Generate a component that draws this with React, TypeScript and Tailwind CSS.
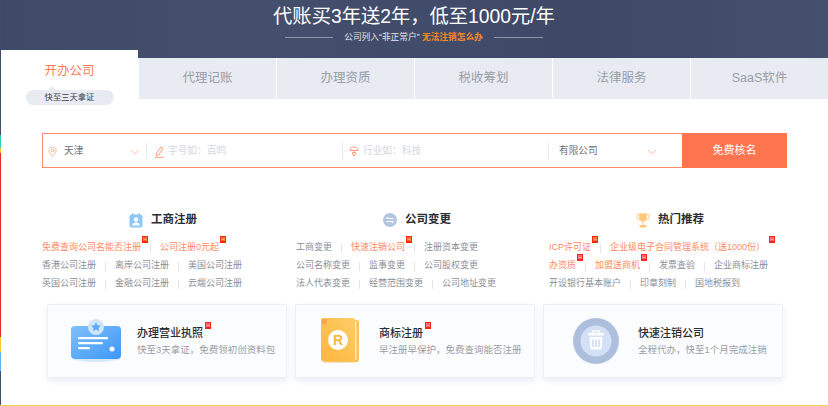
import { ChevronDown, MapPin } from "lucide-react";
import { ReactNode } from "react";

const FONT = "font-['Liberation_Sans','Noto_Sans_CJK_SC',sans-serif]";

type LinkItem = { text: string; hot?: boolean; orange?: boolean; badgeClass?: string };

const tabs = ["代理记账", "办理资质", "税收筹划", "法律服务", "SaaS软件"];

const columns: { title: string; icon: ReactNode; className: string; rows: LinkItem[][] }[] = [
  {
    title: "工商注册",
    icon: <CardIcon />,
    className: "w-[254px]",
    rows: [
      [
        { text: "免费查询公司名能否注册", hot: true, orange: true },
        { text: "公司注册0元起", hot: true, orange: true },
      ],
      [{ text: "香港公司注册" }, { text: "离岸公司注册" }, { text: "美国公司注册" }],
      [{ text: "英国公司注册" }, { text: "金融公司注册" }, { text: "云端公司注册" }],
    ],
  },
  {
    title: "公司变更",
    icon: <SwapIcon />,
    className: "w-[253px]",
    rows: [
      [{ text: "工商变更" }, { text: "快速注销公司", hot: true, orange: true }, { text: "注册资本变更" }],
      [{ text: "公司名称变更" }, { text: "监事变更" }, { text: "公司股权变更" }],
      [{ text: "法人代表变更" }, { text: "经营范围变更" }, { text: "公司地址变更" }],
    ],
  },
  {
    title: "热门推荐",
    icon: <TrophyIcon />,
    className: "w-[238px]",
    rows: [
      [
        { text: "ICP许可证", hot: true, orange: true },
        { text: "企业级电子合同管理系统（送1000份）", hot: true, orange: true, badgeClass: "-right-[10px]" },
      ],
      [
        { text: "办资质", hot: true, orange: true },
        { text: "加盟送商机", hot: true, orange: true },
        { text: "发票查验" },
        { text: "企业商标注册" },
      ],
      [{ text: "开设银行基本账户" }, { text: "印章刻制" }, { text: "国地税报到" }],
    ],
  },
];

function CardIcon() {
  return (
    <svg width="14" height="15" viewBox="0 0 14 15">
      <rect x="0.5" y="1.5" width="13" height="13" rx="2" fill="#8cc8f8" />
      <rect x="3" y="0" width="1.5" height="3" rx="0.7" fill="#8cc8f8" />
      <rect x="9.5" y="0" width="1.5" height="3" rx="0.7" fill="#8cc8f8" />
      <circle cx="7" cy="6.5" r="2.2" fill="#fff" />
      <path d="M3 12.5c.5-2.4 2-3 4-3s3.500.6 4 3z" fill="#fff" />
    </svg>
  );
}

function SwapIcon() {
  return (
    <svg width="14" height="14" viewBox="0 0 14 14">
      <circle cx="7" cy="7" r="7" fill="#b3c5e0" />
      <path d="M3.500 5.500h7M3.500 5.500l1.500-1.300M10.500 8.500h-7M10.500 8.500l-1.500 1.300" stroke="#fff" strokeWidth="1.100" fill="none" />
    </svg>
  );
}

function TrophyIcon() {
  return (
    <svg width="14" height="15" viewBox="0 0 14 15">
      <path d="M1 1.500h12v2c0 2-1.500 3.300-3 3.300M1 1.500v2c0 2 1.500 3.300 3 3.300" stroke="#ffd9a8" strokeWidth="1.300" fill="none" />
      <path d="M3.200 0.500h7.600v4.300c0 2.300-1.700 4-3.800 4s-3.800-1.700-3.800-4z" fill="#ffc680" />
      <rect x="6.200" y="8.500" width="1.600" height="3.500" fill="#ffd9a8" />
      <rect x="3.500" y="12" width="7" height="2.500" rx="0.800" fill="#ffc680" />
    </svg>
  );
}

function LicenseArt() {
  return (
    <svg width="52" height="44" viewBox="0 0 52 44">
      <defs>
        <linearGradient id="lic" x1="0" y1="0" x2="1" y2="1">
          <stop offset="0" stopColor="#7fc0fb" />
          <stop offset="1" stopColor="#3d97f8" />
        </linearGradient>
      </defs>
      <ellipse cx="26" cy="39" rx="24" ry="4" fill="#d5e8fc" />
      <rect x="1" y="7" width="50" height="33" rx="4" fill="url(#lic)" />
      <circle cx="26" cy="8" r="8" fill="#cfe5fb" />
      <path d="M26 3l1.500 3.200 3.400.4-2.500 2.300.7 3.400-3.100-1.700-3.100 1.700.7-3.400-2.500-2.300 3.400-.4z" fill="#5fa9f5" />
      <rect x="8" y="18" width="30" height="2.200" rx="1" fill="#fff" />
      <rect x="8" y="23" width="25" height="2.200" rx="1" fill="#fff" opacity="0.95" />
      <rect x="8" y="28" width="12" height="2.200" rx="1" fill="#fff" opacity="0.95" />
      <circle cx="42" cy="30" r="2.500" fill="#fff" />
    </svg>
  );
}

function BookArt() {
  return (
    <svg width="38" height="46" viewBox="0 0 38 46">
      <defs>
        <linearGradient id="book" x1="0" y1="1" x2="1" y2="0">
          <stop offset="0" stopColor="#fdb73e" />
          <stop offset="1" stopColor="#ffcc66" />
        </linearGradient>
      </defs>
      <rect x="1" y="42" width="35" height="3" rx="1.500" fill="#f5e3c4" />
      <rect x="3" y="2" width="35" height="42" rx="2" fill="#fbc25a" />
      <rect x="34" y="3" width="1.500" height="39" fill="#ffe9bd" />
      <rect x="0" y="0" width="34" height="43" rx="2" fill="url(#book)" />
      <rect x="1" y="1" width="5" height="5" fill="#ef9a45" opacity="0.7" />
      <circle cx="17" cy="22" r="10" fill="#fff" />
      <text x="17" y="27" textAnchor="middle" fontSize="14" fontWeight="700" fill="#fbb73a" fontFamily="Liberation Sans, sans-serif">
        R
      </text>
    </svg>
  );
}

function TrashArt() {
  return (
    <svg width="46" height="46" viewBox="0 0 46 46">
      <circle cx="23" cy="23" r="23" fill="#aebfdd" />
      <circle cx="23" cy="23" r="15.500" fill="#d3e0f5" />
      <path d="M20 15v-2h6v2" stroke="#fff" strokeWidth="1.500" fill="none" />
      <rect x="15" y="15" width="16" height="2.500" rx="1" fill="#fff" />
      <path d="M16.500 19h13l-1 12.500h-11z" fill="#fff" />
      <path d="M20 21.500v7.500M23 21.500v7.500M26 21.500v7.500" stroke="#c4d3ec" strokeWidth="1.300" />
    </svg>
  );
}

function Hot({ className }: { className?: string }) {
  return (
    <span
      className={`absolute -top-[5px] flex h-[7px] w-[6px] items-center justify-center bg-[#f5290f] text-[5px] leading-none font-bold text-[#ffd6cc] ${className ?? "-right-[7px]"}`}
    >
      H
    </span>
  );
}

function LinkRow({ items }: { items: LinkItem[] }) {
  return (
    <div className="flex h-[18px] items-center text-[9px]">
      {items.map((item, i) => (
        <div key={item.text} className="flex items-center">
          {i > 0 && <span className="mx-[9px] h-[9px] w-px bg-[#e3e5ea]" />}
          <span className={`relative whitespace-nowrap ${item.orange ? "text-[#ff8a66]" : "text-[#8b8f98]"}`}>
            {item.text}
            {item.hot && <Hot className={item.badgeClass} />}
          </span>
        </div>
      ))}
    </div>
  );
}

function PromoCard({
  art,
  title,
  desc,
  hot,
  className,
  artClass,
}: {
  art: ReactNode;
  title: string;
  desc: string;
  hot?: boolean;
  className: string;
  artClass: string;
}) {
  return (
    <div className={`flex h-[74px] w-[240px] items-center border border-[#eef0f5] bg-[#fbfcfe] shadow-[0_3px_6px_rgba(210,216,230,0.45)] ${className}`}>
      <div className={`flex shrink-0 justify-center ${artClass}`}>{art}</div>
      <div className="flex flex-col">
        <div className="mb-[3px] flex h-[14px] items-center text-[11px] leading-none font-medium text-[#2b2d33]">
          <span className="relative">
            {title}
            {hot && <Hot className="-right-[8px] -top-[6px]" />}
          </span>
        </div>
        <div className="text-[9.500px] leading-[13px] whitespace-nowrap text-[#9a9da6]">{desc}</div>
      </div>
    </div>
  );
}

export default function App() {
  return (
    <div className={`flex h-[406px] w-[828px] flex-col overflow-hidden bg-white ${FONT}`}>
      <div className="flex min-h-0 flex-1">
        {/* coloured strip on the far left */}
        <div className="flex w-px shrink-0 flex-col">
          <div className="h-[135px] bg-[#414c6b]" />
          <div className="h-[13px] bg-[#2fcfb0]" />
          <div className="h-[5px] bg-[#f8c22e]" />
          <div className="h-[184px] bg-[#e02a2a]" />
          <div className="h-[15px] bg-[#f8cb3a]" />
          <div className="h-[19px] bg-[#5db4ea]" />
          <div className="flex-1 bg-[#414c6b]" />
        </div>

        <div className="flex min-w-0 flex-1 flex-col">
          <header className="flex h-[58px] shrink-0 flex-col items-center bg-[linear-gradient(90deg,#3f4a69_0%,#444f6e_30%,#3e4968_70%,#454f6e_100%)] pr-px">
            <h1 className="mt-[5px] h-[23px] text-[19.300px] leading-[23px] font-normal whitespace-nowrap text-white">
              代账买3年送2年，低至1000元/年
            </h1>
            <div className="mt-[3px] flex items-center text-[8.700px] leading-[12px]">
              <span className="h-px w-[48px] bg-[#8d94a8]" />
              <span className="mx-[11px] text-[#e4e6ec]">
                公司列入“非正常户” <b className="text-[#ff8a1c]">无法注销怎么办</b>
              </span>
              <span className="h-px w-[49px] bg-[#8d94a8]" />
            </div>
          </header>

          <nav className="flex h-[50px] shrink-0 items-start">
            <div className="-mt-[8px] flex h-[58px] w-[137px] shrink-0 flex-col items-center bg-white pt-[13px]">
              <span className="text-[12.500px] leading-[16px] text-[#ff7a55]">开办公司</span>
              <span className="relative mt-[11px] flex h-[15px] w-[88px] shrink-0 items-center justify-center rounded-full bg-[#e8ebf2] text-[8.300px] text-[#3a3d45]">
                <i className="absolute -top-[4px] left-[22px] h-0 w-0 border-x-[4px] border-b-[4px] border-x-transparent border-b-[#e8ebf2]" />
                快至三天拿证
              </span>
            </div>
            {tabs.map((t) => (
              <div
                key={t}
                className="flex h-[41px] flex-1 items-center justify-center border-l border-l-white bg-[#e8ebf2] text-[12.500px] text-[#9a9ea8]"
              >
                {t}
              </div>
            ))}
          </nav>

          <div className="mt-[25px] ml-[41px] flex h-[35px] w-[745px] shrink-0 border border-[#ff8d6b] text-[9.700px]">
            <div className="flex w-[103px] items-center pl-[4px] pt-[2px]">
              <MapPin size={11} strokeWidth={1.500} className="text-[#ff9b7d]" />
              <span className="ml-[6px] text-[#6e7179]">天津</span>
              <ChevronDown size={14} strokeWidth={1.200} className="ml-auto mr-[4px] text-[#ff9b7d]" />
            </div>
            <div className="my-auto h-[16px] w-px bg-[#e8e9ed]" />
            <div className="flex w-[195px] items-center pl-[7px] pt-[2px] text-[#d4d7de]">
              <svg width="11" height="12" viewBox="0 0 11 12" fill="none" stroke="#ff9b7d" strokeWidth="1">
                <path d="M7 1l2 1.300-4.200 6.500-2.500 1 .2-2.700zM1 11.300h9" />
              </svg>
              <span className="ml-[3px]">字号如：百鸣</span>
            </div>
            <div className="my-auto h-[16px] w-px bg-[#e8e9ed]" />
            <div className="flex w-[205px] items-center pl-[6px] pt-[2px] text-[#d4d7de]">
              <svg width="10" height="11" viewBox="0 0 10 11" fill="none" stroke="#ff9b7d" strokeWidth="1">
                <path d="M1 4.500C1 2 3 1 5 1s4 1 4 3.500zM5 4.500v2M3.500 6.500h3l-.5 3h-2z" />
              </svg>
              <span className="ml-[4px]">行业如：科技</span>
            </div>
            <div className="my-auto h-[16px] w-px bg-[#e8e9ed]" />
            <div className="flex flex-1 items-center pl-[10px] pt-[2px]">
              <span className="text-[#6e7179]">有限公司</span>
              <ChevronDown size={14} strokeWidth={1.200} className="ml-[47px] text-[#ff9b7d]" />
            </div>
            <button className="-my-px -mr-px flex w-[105px] items-center justify-center bg-[#ff7550] text-[11px] text-white">
              免费核名
            </button>
          </div>

          <div className="mt-[44px] ml-[41px] flex shrink-0">
            {columns.map((col) => (
              <div key={col.title} className={col.className}>
                <div className="mb-[11px] flex h-[16px] w-[246px] items-center justify-center gap-[8px] pr-[4px]">
                  {col.icon}
                  <span className="text-[11.500px] font-bold text-[#2b2d33]">{col.title}</span>
                </div>
                {col.rows.map((row, i) => (
                  <LinkRow key={i} items={row} />
                ))}
              </div>
            ))}
          </div>

          <div className="mt-[11px] ml-[46px] flex shrink-0 gap-[8px]">
            <PromoCard
              art={<LicenseArt />}
              title="办理营业执照"
              desc="快至3天拿证，免费领初创资料包"
              hot
              className="pl-[22px]"
              artClass="w-[52px] mr-[15px]"
            />
            <PromoCard
              art={<BookArt />}
              title="商标注册"
              desc="早注册早保护，免费查询能否注册"
              hot
              className="pl-[25px]"
              artClass="w-[38px] mr-[20px]"
            />
            <PromoCard
              art={<TrashArt />}
              title="快速注销公司"
              desc="全程代办，快至1个月完成注销"
              className="pl-[29px]"
              artClass="w-[46px] mr-[19px]"
            />
          </div>
        </div>
      </div>
      <div className="h-px shrink-0 bg-[#f6cf4e]" />
    </div>
  );
}
